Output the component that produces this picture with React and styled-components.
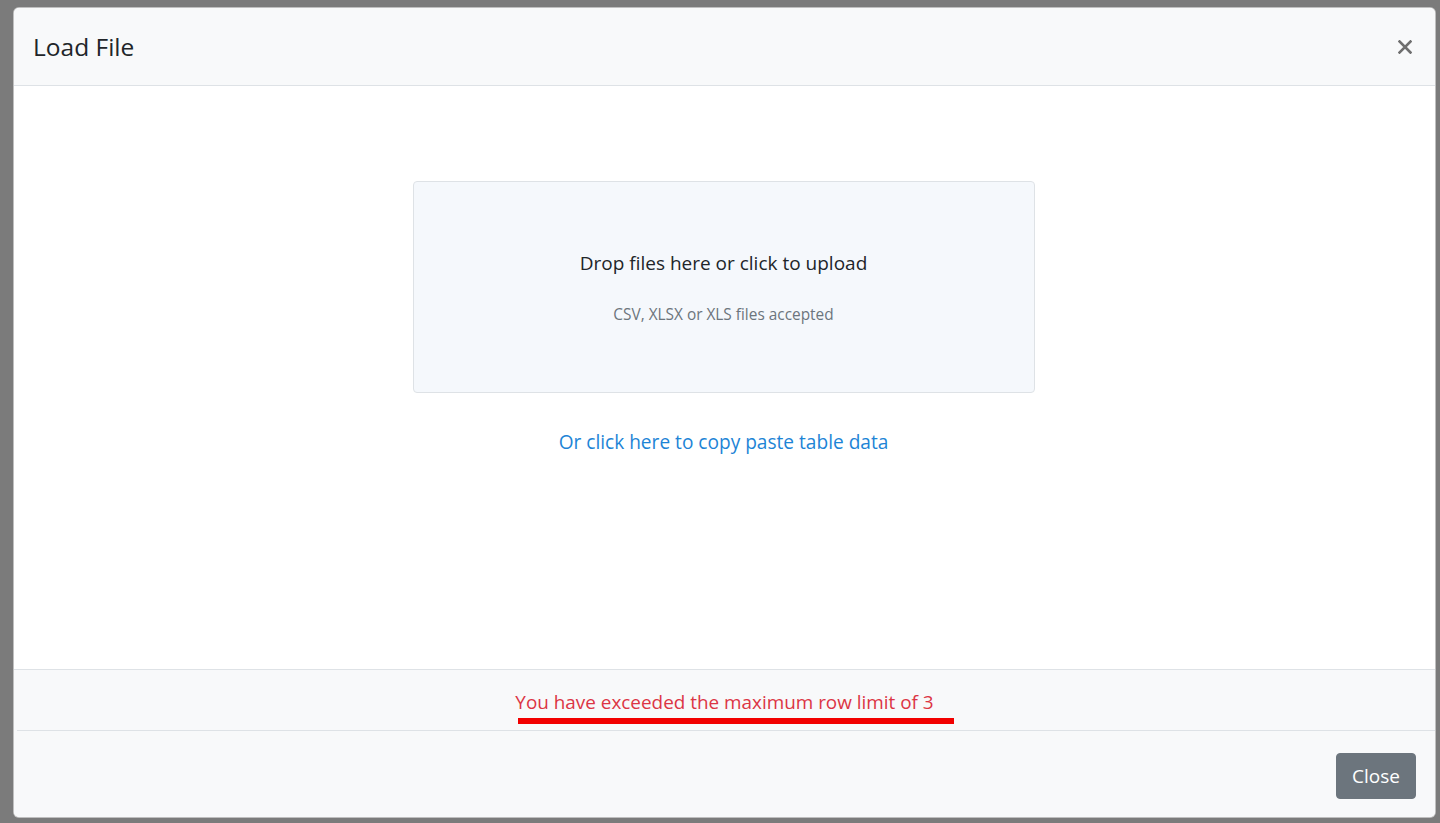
import React from 'react';
import styled, { createGlobalStyle } from 'styled-components';

const GlobalStyle = createGlobalStyle`
	html, body {
		margin: 0;
		padding: 0;
		height: 100%;
		background: #7b7b7b;
		font-family: "Segoe UI", "Open Sans", "Noto Sans", sans-serif;
	}
	#root {
		height: 100%;
	}
`;

const Backdrop = styled.div`
	height: 823px;
	box-sizing: border-box;
	padding: 7px 4px 5px 13px;
	display: flex;
`;

const Modal = styled.div`
	flex: 1;
	display: flex;
	flex-direction: column;
	background: #fff;
	border-radius: 6px;
	border: 1px solid rgba(0, 0, 0, 0.25);
	overflow: hidden;
`;

const Header = styled.div`
	height: 78px;
	box-sizing: border-box;
	display: flex;
	align-items: center;
	justify-content: space-between;
	padding: 0 20px 0 19px;
	background: #f8f9fa;
	border-bottom: 1px solid #dee2e6;
`;

const Title = styled.h5`
	margin: 0;
	font-size: 24.5px;
	font-weight: 500;
	color: #212529;
`;

const CloseX = styled.button`
	border: none;
	background: none;
	padding: 0;
	width: 20px;
	height: 20px;
	display: flex;
	align-items: center;
	justify-content: center;
	cursor: pointer;
`;

const Body = styled.div`
	flex: 1;
	display: flex;
	flex-direction: column;
	align-items: center;
	padding: 95px 2px 0 0;
`;

const DropZone = styled.div`
	width: 622px;
	height: 212px;
	box-sizing: border-box;
	background: #f5f8fc;
	border: 1px solid #dee2e6;
	border-radius: 4px;
	display: flex;
	flex-direction: column;
	align-items: center;
	padding-top: 68px;
`;

const DropTitle = styled.div`
	font-size: 19px;
	color: #212529;
	line-height: 26px;
`;

const DropHint = styled.div`
	margin-top: 29px;
	font-size: 15.4px;
	color: #6c757d;
	line-height: 20px;
`;

const PasteLink = styled.a`
	margin-top: 36px;
	font-size: 19.1px;
	color: #1d84d6;
	text-decoration: none;
	cursor: pointer;
	line-height: 26px;
`;

const ErrorBar = styled.div`
	height: 61px;
	box-sizing: border-box;
	background: #f8f9fa;
	border-top: 1px solid #dee2e6;
	display: flex;
	flex-direction: column;
	align-items: center;
	padding-top: 19px;
	position: relative;
	&::after {
		content: '';
		position: absolute;
		left: 3px;
		right: 0;
		bottom: -1px;
		height: 1px;
		background: #dee2e6;
	}
`;

const ErrorText = styled.div`
	font-size: 18.9px;
	color: #dc3545;
	line-height: 26px;
	position: relative;
`;

const Underline = styled.span`
	position: absolute;
	left: 3px;
	right: -20px;
	top: 29px;
	height: 6px;
	background: #f20000;
`;

const Footer = styled.div`
	height: 87px;
	box-sizing: border-box;
	background: #f8f9fa;
	display: flex;
	align-items: center;
	justify-content: flex-end;
	padding: 4px 19px 0 0;
`;

const Button = styled.button`
	height: 46px;
	width: 80px;
	padding: 0;
	background: #6c757d;
	border: 1px solid #6c757d;
	border-radius: 4px;
	color: #fff;
	font-family: inherit;
	font-size: 19px;
	cursor: pointer;
`;

export default function App() {
	return (
		<>
			<GlobalStyle />
			<Backdrop>
				<Modal>
					<Header>
						<Title>Load File</Title>
						<CloseX aria-label="Close">
							<svg width="14" height="14" viewBox="0 0 14 14">
								<path d="M1.5 1.5 L12.5 12.5 M12.5 1.5 L1.5 12.5" stroke="#6f6f6f" strokeWidth="2.6" strokeLinecap="square" />
							</svg>
						</CloseX>
					</Header>
					<Body>
						<DropZone>
							<DropTitle>Drop files here or click to upload</DropTitle>
							<DropHint>CSV, XLSX or XLS files accepted</DropHint>
						</DropZone>
						<PasteLink>Or click here to copy paste table data</PasteLink>
					</Body>
					<ErrorBar>
						<ErrorText>
							You have exceeded the maximum row limit of 3
							<Underline />
						</ErrorText>
					</ErrorBar>
					<Footer>
						<Button>Close</Button>
					</Footer>
				</Modal>
			</Backdrop>
		</>
	);
}
